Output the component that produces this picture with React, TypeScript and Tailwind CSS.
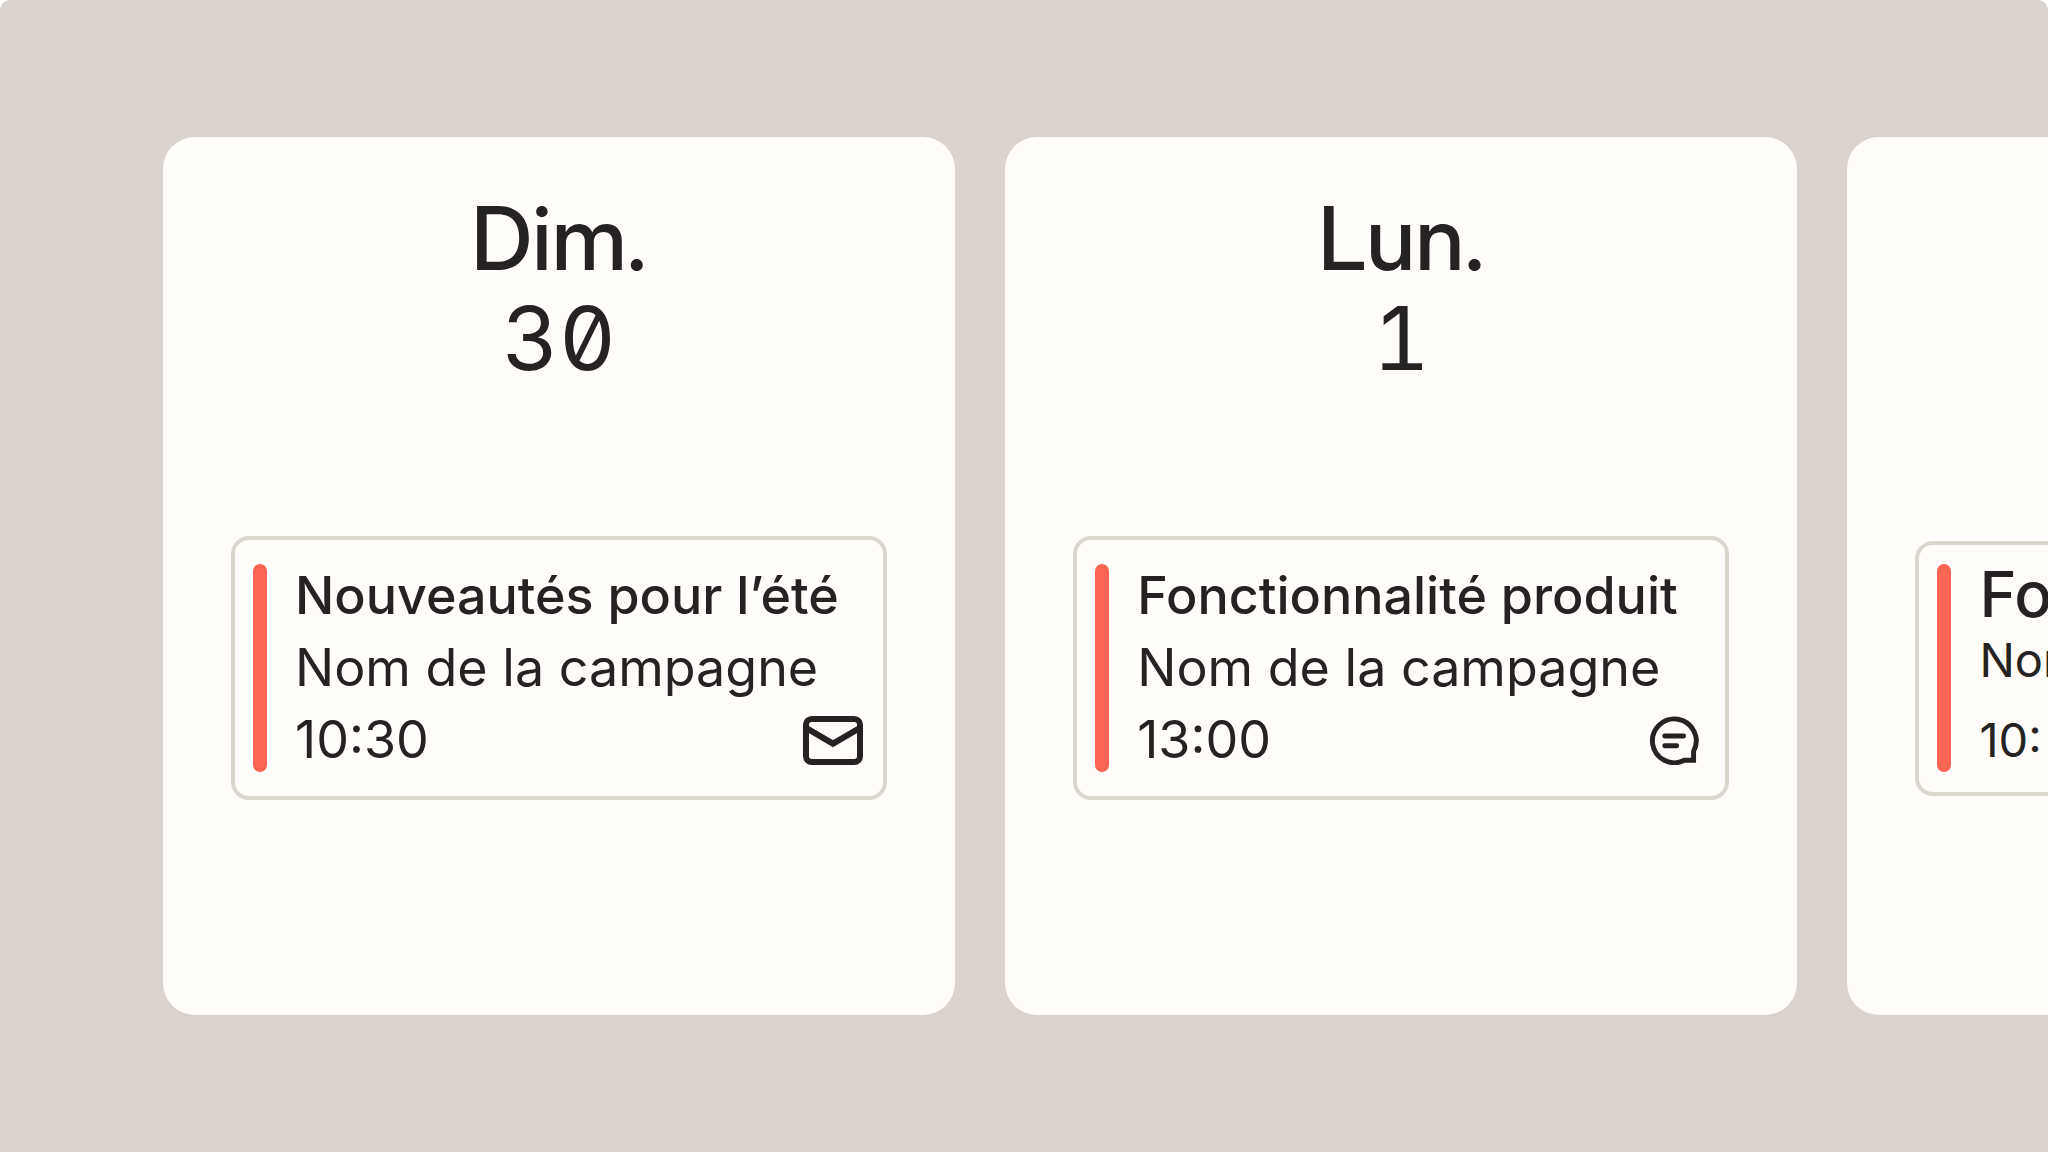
import React from 'react';

type Channel = 'email' | 'sms';

interface CalendarEvent {
  title: string;
  campaign: string;
  time: string;
  channel: Channel;
}

interface Day {
  name: string;
  date: string;
  event: CalendarEvent;
}

const days: Day[] = [
  {
    name: 'Dim.',
    date: '30',
    event: { title: 'Nouveautés pour l’été', campaign: 'Nom de la campagne', time: '10:30', channel: 'email' },
  },
  {
    name: 'Lun.',
    date: '1',
    event: { title: 'Fonctionnalité produit', campaign: 'Nom de la campagne', time: '13:00', channel: 'sms' },
  },
];

const ChannelIcon: React.FC<{ channel: Channel }> = ({ channel }) => {
  if (channel === 'email') {
    return (
      <svg className="w-[60px] h-[50px] shrink-0" viewBox="0 0 60 50" fill="none" stroke="currentColor" strokeWidth="6" role="img" aria-label="E-mail">
        <rect x="3" y="4" width="54" height="43" rx="5.7" />
        <path d="M3 12.8 30 28.7 57 12.8" />
      </svg>
    );
  }
  return (
    <svg className="w-[60px] h-[50px] shrink-0" viewBox="0 0 60 50" fill="none" stroke="currentColor" strokeWidth="4.9" role="img" aria-label="SMS">
      <path d="M39.3 45.3A21.9 21.9 0 1 1 48.6 36.2V45.3Z" />
      <path d="M19.7 21H38.6M19.7 30.7H31.7" strokeLinecap="round" />
    </svg>
  );
};

const EventCard: React.FC<{ event: CalendarEvent }> = ({ event }) => (
  <article className="flex gap-7 rounded-[18px] border-4 border-[#dbd6ce] py-5 pr-5 pl-[18px]">
    <span className="my-1 w-[14px] shrink-0 rounded-full bg-[#fc6454]" />
    <div className="min-w-0 flex-1 text-[52px] leading-[72px] whitespace-nowrap">
      <h3 className="font-medium">{event.title}</h3>
      <p>{event.campaign}</p>
      <div className="flex items-center justify-between">
        <time>{event.time}</time>
        <ChannelIcon channel={event.channel} />
      </div>
    </div>
  </article>
);

const App: React.FC = () => {
  return (
    <div className="bg-white">
      <main className="grid min-h-screen grid-cols-[79fr_79fr_20fr] gap-[50px] overflow-hidden rounded-t-[10px] bg-[#dbd3cd] py-[137px] pl-[163px] font-['Inter',sans-serif] text-[#242222]">
        {days.map((day) => (
          <section key={day.name} className="min-w-0 rounded-[32px] bg-[#fffcf9] px-[68px] pt-[51px]">
            <header className="mb-[148px] text-center text-[88px] leading-[100px]">
              <h2 className="font-['Inter_Display','Inter',sans-serif] font-medium">{day.name}</h2>
              <p className="[font-feature-settings:'zero','tnum']">{day.date}</p>
            </header>
            <EventCard event={day.event} />
          </section>
        ))}

        {/* Next day, only its leading edge is in view */}
        <section className="min-w-0 overflow-hidden rounded-l-[32px] bg-[#fffcf9] pt-[404px] pl-[68px]">
          <article className="flex gap-7 rounded-l-[18px] border-4 border-r-0 border-[#dbd6ce] pt-[19px] pb-4 pl-[18px]">
            <span className="mb-1 w-[14px] shrink-0 rounded-full bg-[#fc6454]" />
            <div className="min-w-0 flex-1 overflow-hidden text-[47px] leading-[72px] whitespace-nowrap">
              <h3 className="text-[63px] leading-[60px] font-medium">Fo</h3>
              <p>Nom</p>
              <time className="mt-2 block">10:</time>
            </div>
          </article>
        </section>
      </main>
    </div>
  );
};

export default App;
